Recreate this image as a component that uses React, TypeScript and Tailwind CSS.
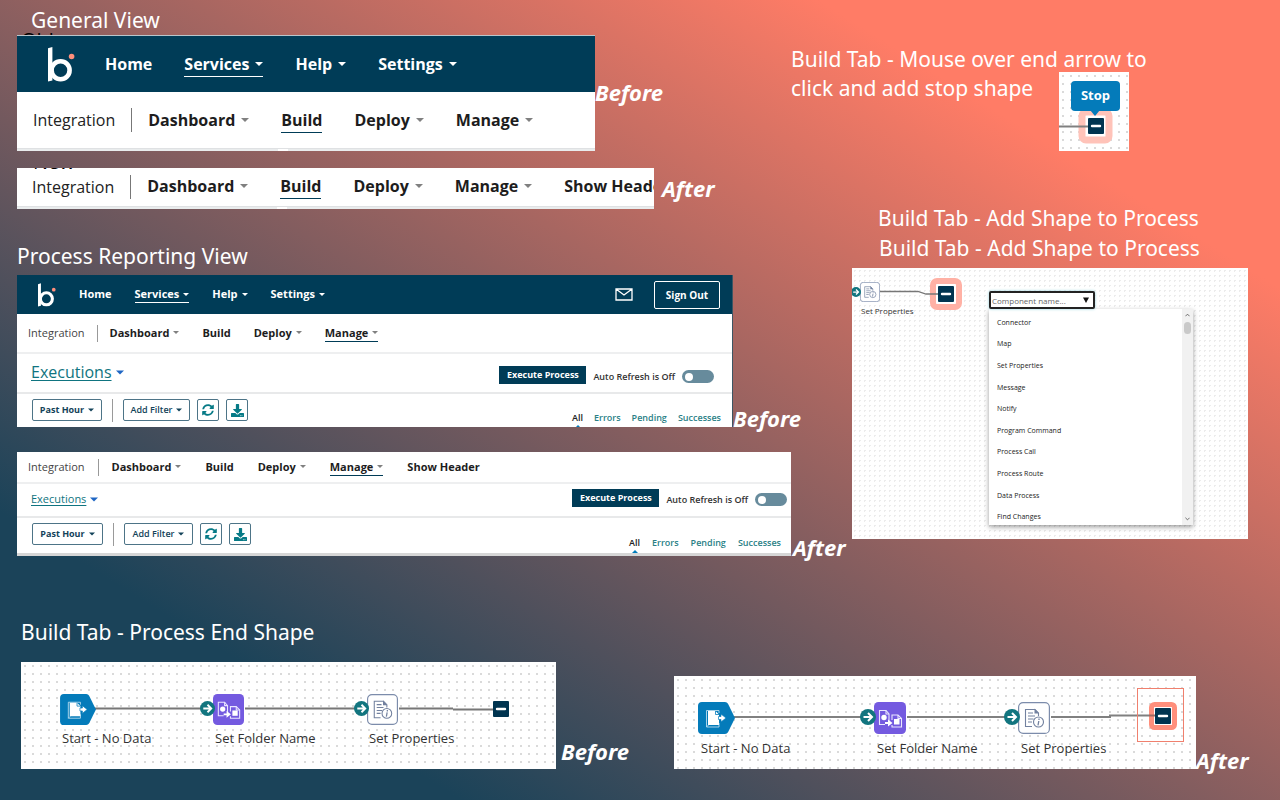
import type { ReactNode } from "react";
import { FaDownload, FaSyncAlt } from "react-icons/fa";

function Caret({ className }: { className: string }) {
  return (
    <svg viewBox="0 0 8 4" className={className} aria-hidden="true">
      <path d="M0 0h8L4 4z" fill="currentColor" />
    </svg>
  );
}

function Logo({ className }: { className: string }) {
  return (
    <svg viewBox="0 0 27 35" className={className} role="img" aria-label="Boomi">
      <path d="M0 1.2L4.400 0v33.6L0 34.600z" fill="#fff" />
      <circle cx="12.600" cy="23.200" r="9" fill="none" stroke="#fff" strokeWidth="4.600" />
      <circle cx="23.6" cy="9.5" r="2.800" fill="#ff8f7c" />
    </svg>
  );
}

function Heading({ children, className = "" }: { children: ReactNode; className?: string }) {
  return (
    <h2 className={`pt-px font-['Noto_Sans','Open_Sans',sans-serif] text-[21px] leading-[29px] whitespace-nowrap text-white ${className}`}>
      {children}
    </h2>
  );
}

function Tag({ children, className = "" }: { children: ReactNode; className?: string }) {
  return (
    <p className={`self-end font-['Noto_Sans','Open_Sans',sans-serif] text-[22px] leading-7 font-bold italic whitespace-nowrap text-white ${className}`}>
      {children}
    </p>
  );
}

type Item = { label: string; menu?: boolean; active?: boolean };

const topItems: Item[] = [
  { label: "Home" },
  { label: "Services", menu: true, active: true },
  { label: "Help", menu: true },
  { label: "Settings", menu: true },
];

function subItems(active: string, showHeader: boolean): Item[] {
  const items: Item[] = [
    { label: "Dashboard", menu: true },
    { label: "Build" },
    { label: "Deploy", menu: true },
    { label: "Manage", menu: true },
  ];
  if (showHeader) items.push({ label: "Show Header" });
  return items.map((i) => ({ ...i, active: i.label === active }));
}

function NavLinks({ items, small, dark }: { items: Item[]; small?: boolean; dark?: boolean }) {
  return (
    <>
      {items.map((i) => (
        <a
          key={i.label}
          href="#"
          className={[
            "flex shrink-0 items-center border-b font-bold whitespace-nowrap",
            small ? "gap-1 text-[11px] leading-4" : "gap-[6px] text-base leading-6",
            dark ? "text-white" : "text-[#1d1d1d]",
            i.active ? (dark ? "border-white" : "border-[#003c57]") : "border-transparent",
          ].join(" ")}
        >
          {i.label}
          {i.menu && (
            <Caret
              className={`${small ? "h-[3px] w-[6px]" : "h-1 w-2"} ${dark ? "text-white" : "text-[#808080]"}`}
            />
          )}
        </a>
      ))}
    </>
  );
}

function TopBar({ small, children }: { small?: boolean; children?: ReactNode }) {
  return (
    <nav
      className={
        small
          ? "flex h-[39px] items-center gap-[23px] bg-[#003c57] pr-3 pl-[21px]"
          : "flex h-14 items-center gap-8 bg-[#003c57] pl-[31px]"
      }
    >
      <Logo className={small ? "h-6 w-[18px] shrink-0" : "-mr-[2px] h-[35px] w-[27px] shrink-0"} />
      <NavLinks items={topItems} small={small} dark />
      {children}
    </nav>
  );
}

type Size = "large" | "small" | "wide";

const barGap: Record<Size, string> = {
  large: "gap-8 pl-4",
  small: "gap-[23px] pl-[11px]",
  wide: "gap-6 pl-[11px]",
};

const leadGap: Record<Size, string> = {
  large: "gap-4",
  small: "gap-3",
  wide: "gap-[13px]",
};

function SubBar({ size, items, className }: { size: Size; items: Item[]; className: string }) {
  const small = size !== "large";
  return (
    <nav className={`flex items-center ${barGap[size]} ${className}`}>
      <div className={`flex items-center ${leadGap[size]}`}>
        <span className={small ? "text-[11px] leading-4 text-[#444]" : "text-base leading-6 text-[#222]"}>
          Integration
        </span>
        <span className={small ? "h-[17px] w-px bg-[#999]" : "h-6 w-px bg-[#777]"} />
        <NavLinks items={items.slice(0, 1)} small={small} />
      </div>
      <NavLinks items={items.slice(1)} small={small} />
    </nav>
  );
}

function ExecutionsBar({
  id,
  large,
  className,
  actionsClass,
}: {
  id: string;
  large?: boolean;
  className: string;
  actionsClass: string;
}) {
  return (
    <div className={`flex items-center justify-between border-t-2 border-[#eeeff0] pl-[14px] ${className}`}>
      <a href="#" className="flex items-center gap-1 pb-[2px] text-[#0f7480]">
        <span
          className={
            large
              ? "text-base leading-6 underline underline-offset-2"
              : "text-[11px] leading-4 underline underline-offset-2"
          }
        >
          Executions
        </span>
        <Caret className="h-[5px] w-2 text-[#1f66c4]" />
      </a>
      <div className={`flex items-center gap-[7px] ${actionsClass}`}>
        <button type="button" className="h-[18px] w-[87px] bg-[#003c57] text-[9px] leading-3 font-bold whitespace-nowrap text-white">
          Execute Process
        </button>
        <label htmlFor={id} className="pt-1 text-[9px] leading-3 font-semibold whitespace-nowrap text-[#333]">
          Auto Refresh is Off
        </label>
        <input
          id={id}
          type="checkbox"
          role="switch"
          className="mt-1 flex h-[13px] w-8 shrink-0 appearance-none items-center rounded-full bg-[#678b9c] px-[3px] before:size-2 before:rounded-full before:bg-white before:content-[''] checked:justify-end"
        />
      </div>
    </div>
  );
}

function FilterBar({ wide, className, tabsClass }: { wide?: boolean; className: string; tabsClass: string }) {
  const box = "flex h-[22px] items-center justify-center rounded-xs border border-[#4d7487] bg-white";
  return (
    <div className={`flex justify-between border-t-2 border-[#e8e9ea] pl-[15px] ${className}`}>
      <div className="flex h-[22px] items-center gap-[7px]">
        <button
          type="button"
          className={`${box} gap-1 text-[9px] font-bold whitespace-nowrap text-[#134259] ${wide ? "w-[71px]" : "w-[70px]"}`}
        >
          Past Hour
          <Caret className="h-1 w-[6px]" />
        </button>
        <span className="mx-[3px] h-[23px] w-px bg-[#9a9a9a]" />
        <button
          type="button"
          className={`${box} gap-1 text-[9px] font-semibold whitespace-nowrap text-[#134259] ${wide ? "w-[69px]" : "w-[67px]"}`}
        >
          Add Filter
          <Caret className="h-1 w-[6px]" />
        </button>
        <button type="button" aria-label="Refresh" className={`${box} w-[22px] text-[#067a86]`}>
          <FaSyncAlt className="size-3" />
        </button>
        <button type="button" aria-label="Download" className={`${box} w-[22px] text-[#067a86]`}>
          <FaDownload className="size-[13px]" />
        </button>
      </div>
      <div className={`flex items-start text-[9px] leading-3 font-semibold text-[#2a7f86] ${tabsClass}`}>
        <a href="#" className="flex flex-col items-center text-[#222]">
          All
          <svg viewBox="0 0 8 4" className="mt-px h-1 w-2" aria-hidden="true">
            <path d="M0 4L4 0l4 4z" fill="#007cbb" />
          </svg>
        </a>
        <a href="#">Errors</a>
        <a href="#">Pending</a>
        <a href="#">Successes</a>
      </div>
    </div>
  );
}

function StopGlyph() {
  return (
    <>
      <rect width="16" height="16" rx="1" fill="#003450" />
      <path d="M4 8h8" stroke="#fff" strokeWidth="2.4" strokeLinecap="round" />
    </>
  );
}

function ArrowGlyph() {
  return (
    <>
      <circle cx="8" cy="8" r="8" fill="#12757f" />
      <path d="M3.5 8h8M8 4l4 4-4 4" fill="none" stroke="#fff" strokeWidth="2" />
    </>
  );
}

function StartGlyph() {
  return (
    <>
      <path d="M4 0h23q2 0 3 1.8l7 14.2-7 14.2Q29 32 27 32H4q-4 0-4-4V4q0-4 4-4z" fill="#047bba" />
      <path d="M21 11V8.500H8.500v16.500H21V21M8.500 25l2-2" fill="none" stroke="#b9dcef" strokeWidth=".9" />
      <path d="M10 9h7.500l3.500 3.500v10.500H10z" fill="#fff" />
      <path d="M17.500 9v3.500H21" fill="none" stroke="#047bba" strokeWidth=".8" />
      <path d="M20.500 14.500H23V12l5 4-5 4v-2.500h-2.500z" fill="#fff" stroke="#047bba" strokeWidth=".7" />
    </>
  );
}

function FolderGlyph() {
  return (
    <>
      <rect width="32" height="32" rx="4.500" fill="#745ae0" />
      <g fill="none" stroke="#eae6ff" strokeWidth="1.100">
        <path d="M15 19V12l-3-3.500H5.500v14H11" />
        <path d="M12 8.500V12h3" />
        <path d="M18 18v-5h6l3.500 3.500V25H18v-2" />
        <path d="M24 13v3.500h3.500" />
      </g>
      <circle cx="10" cy="15.500" r="2.700" fill="#fff" />
      <rect x="20" y="17" width="5.500" height="5.500" fill="#fff" />
      <path d="M11 20h3v-2.500l4.500 3.500-4.500 3.500V22h-3z" fill="#fff" />
    </>
  );
}

function PropertiesGlyph() {
  return (
    <>
      <rect x=".6" y=".6" width="30.800" height="30.800" rx="4.500" fill="#fff" stroke="#7c8cab" strokeWidth="1.200" />
      <g fill="none" stroke="#72819f" strokeWidth="1.100">
        <path d="M14 24.500H7.500v-17h9.500L20.500 11v3" />
        <path d="M10 11h5M10 14h7M10 17h5.500M10 20h4" />
        <circle cx="20.500" cy="20" r="5" fill="#fff" />
      </g>
      <path d="M16.500 6.500l4.500 5h-4.500z" fill="#72819f" />
      <path d="M21 16.600v1.400M20.800 19l-.8 4.300" stroke="#72819f" strokeWidth="1.300" />
    </>
  );
}

function Node({
  className,
  label,
  labelClass,
  view,
  children,
}: {
  className: string;
  label?: string;
  labelClass?: string;
  view: string;
  children: ReactNode;
}) {
  return (
    <div className={`absolute ${className}`}>
      <svg viewBox={view} className="block h-full w-full" role="img" aria-label={label ?? "Stop"}>
        {children}
      </svg>
      {label && <span className={`absolute whitespace-nowrap text-[#333] ${labelClass}`}>{label}</span>}
    </div>
  );
}

const shapes = [
  "Connector",
  "Map",
  "Set Properties",
  "Message",
  "Notify",
  "Program Command",
  "Process Call",
  "Process Route",
  "Data Process",
  "Find Changes",
];

const dots8 = "bg-white bg-[radial-gradient(circle,#dadada_1px,transparent_1px)] bg-size-[8px_8px]";
const dots5 = "bg-white bg-[radial-gradient(circle,#ececec_1px,transparent_1px)] bg-size-[5px_5px]";

export default function App() {
  return (
    <main className="min-h-screen bg-[linear-gradient(to_top_right,#1b4359_18%,#ff7c66_82%)] pt-[5px] pb-[31px] font-['Open_Sans','Noto_Sans',sans-serif]">
      <div className="grid grid-cols-[835fr_428fr] pl-[17px]">
        <div className="min-w-0">
          <section>
            <Heading className="pl-[14px]">General View</Heading>
            <div className="relative grid grid-cols-[578fr_257fr]">
              <div aria-hidden="true" className="absolute -top-[2px] left-1 h-[2px] overflow-hidden text-xl leading-[14px] text-black">
                Old
              </div>
              <div className="min-w-0 overflow-hidden border-t border-[#b9c6cc] bg-white">
                <TopBar />
                <SubBar size="large" items={subItems("Build", false)} className="h-14" />
                <div className="flex h-[3px] border-t border-[#dfe1e3] bg-[#e9eced]">
                  <span className="ml-[261px] w-[10px] bg-white" />
                </div>
              </div>
              <Tag className="mb-[45px]">Before</Tag>
            </div>
            <div className="mt-[17px] grid grid-cols-[637fr_198fr]">
              <div className="relative min-w-0 overflow-hidden bg-white">
                <div aria-hidden="true" className="absolute top-0 left-4 flex h-[2px] items-end overflow-hidden text-xl leading-4 text-black">
                  New
                </div>
                <SubBar size="large" items={subItems("Build", true)} className="h-[37px] -translate-x-px" />
                <div className="mt-px flex h-[3px] border-t border-[#dfe1e3] bg-[#e9eced]">
                  <span className="ml-[260px] w-[10px] bg-white" />
                </div>
              </div>
              <Tag className="mb-[7px] pl-2">After</Tag>
            </div>
          </section>

          <section className="mt-8">
            <Heading>Process Reporting View</Heading>
            <div className="mt-1 grid grid-cols-[716fr_119fr]">
              <div className="min-w-0 overflow-hidden border-r border-[#3c5563] bg-white">
                <TopBar small>
                  <svg viewBox="0 0 18 13" className="ml-auto h-[13px] w-[18px] shrink-0" role="img" aria-label="Messages">
                    <path d="M1 1h16v11H1zM1 1l8 6 8-6" fill="none" stroke="#fff" strokeWidth="1.300" />
                  </svg>
                  <button type="button" className="-ml-[2px] h-7 w-[66px] shrink-0 rounded-xs border border-white text-[10px] leading-4 font-bold whitespace-nowrap text-white">
                    Sign Out
                  </button>
                </TopBar>
                <SubBar size="small" items={subItems("Manage", false)} className="h-[38px]" />
                <ExecutionsBar id="refresh-before" large className="h-10 pr-[18px]" actionsClass="pt-[3px]" />
                <FilterBar className="h-[35px] pt-[5px]" tabsClass="gap-[11px] pt-[13px] pr-[11px]" />
              </div>
              <Tag className="-mb-[5px]">Before</Tag>
            </div>
            <div className="mt-[25px] grid grid-cols-[774fr_61fr]">
              <div className="min-w-0 overflow-hidden border-b-[3px] border-[#d6d6d6] bg-white">
                <SubBar size="wide" items={subItems("Manage", true)} className="h-[30px]" />
                <ExecutionsBar id="refresh-after" className="h-[34px] pr-1" actionsClass="pb-[5px]" />
                <FilterBar wide className="h-[37px] pt-[5px]" tabsClass="gap-3 pt-[14px] pr-[10px]" />
              </div>
              <Tag className="-mb-[5px] pl-[2px]">After</Tag>
            </div>
          </section>
        </div>

        <div className="min-w-0">
          <section className="-ml-[61px] pt-[39px]">
            <Heading>
              Build Tab - Mouse over end arrow to
              <br />
              click and add stop shape
            </Heading>
            <div className={`relative -mt-[31px] ml-[268px] h-[79px] w-[70px] ${dots8}`}>
              <svg viewBox="0 0 70 79" className="absolute inset-0 h-full w-full" aria-hidden="true">
                <rect x="23" y="40" width="27" height="28" rx="4" fill="#fff" stroke="#ffc3b9" strokeWidth="7" />
                <path d="M0 54.500h29" stroke="#808080" strokeWidth="2" />
                <path d="M31 38l5 6 5-6z" fill="#047bba" />
              </svg>
              <Node className="top-[46px] left-[29px] size-4" view="0 0 16 16">
                <StopGlyph />
              </Node>
              <div role="tooltip" className="absolute top-[9px] left-3 flex h-[30px] w-[49px] items-center justify-center rounded-sm bg-[#047bba] text-[13px] font-bold text-white">
                Stop
              </div>
            </div>
          </section>

          <section className="mt-[52px]">
            <Heading className="pl-[26px]">Build Tab - Add Shape to Process</Heading>
            <Heading className="pl-[27px]">Build Tab - Add Shape to Process</Heading>
            <div className="mt-[5px] grid grid-cols-[396fr_32fr]">
              <div className={`relative h-[271px] min-w-0 overflow-hidden ${dots5}`}>
                <svg viewBox="0 0 120 50" className="absolute top-0 left-0 h-[50px] w-[120px]" aria-hidden="true">
                  <rect x="81" y="13" width="26" height="26" rx="4" fill="#fff" stroke="#ffb1a5" strokeWidth="6" />
                  <path d="M28 23.500h38l8 2.500h14" fill="none" stroke="#777" strokeWidth="1.300" />
                </svg>
                <Node
                  className="top-[14px] left-2 size-5"
                  view="0 0 32 32"
                  label="Set Properties"
                  labelClass="left-px top-[23px] text-[8px] leading-3"
                >
                  <PropertiesGlyph />
                </Node>
                <svg viewBox="0 0 16 16" className="absolute top-[19px] -left-px size-[10px]" aria-hidden="true">
                  <ArrowGlyph />
                </svg>
                <Node className="top-[18px] left-[86px] size-4" view="0 0 16 16">
                  <StopGlyph />
                </Node>
                <div className="absolute top-[23px] left-[137px] w-[204px]">
                  <div className="relative h-[18px] w-[106px] rounded-xs border-2 border-[#222] bg-white shadow-[0_0_3px_#8fd0dc]">
                    <input
                      aria-label="Component name"
                      placeholder="Component name..."
                      className="block h-full w-full bg-transparent px-px text-[8px] leading-3 placeholder:text-[#666] focus:outline-none"
                    />
                    <svg viewBox="0 0 6 6" className="absolute top-1 right-1 size-[6px]" aria-hidden="true">
                      <path d="M0 .5h6L3 6z" fill="#111" />
                    </svg>
                  </div>
                  <div className="flex h-[216px] bg-white shadow-[0_2px_5px_rgba(0,0,0,0.4)]">
                    <ul className="mt-[3px] flex h-[216px] flex-1 flex-col pl-2 text-[7px] leading-3 text-[#222]">
                      {shapes.map((s) => (
                        <li key={s} className="flex flex-1 items-center">
                          <button type="button">{s}</button>
                        </li>
                      ))}
                    </ul>
                    <div className="flex w-[11px] flex-col items-center bg-[#f1f1f1] py-1">
                      <svg viewBox="0 0 6 4" className="h-1 w-[5px]" aria-hidden="true">
                        <path d="M.5 3.500L3 1l2.500 2.500" fill="none" stroke="#555" />
                      </svg>
                      <span className="mt-[5px] h-3 w-[7px] rounded-full bg-[#c9c9c9]" />
                      <svg viewBox="0 0 6 4" className="mt-auto h-1 w-[5px]" aria-hidden="true">
                        <path d="M.5 .5L3 3 5.500 .5" fill="none" stroke="#555" />
                      </svg>
                    </div>
                  </div>
                </div>
              </div>
            </div>
          </section>
        </div>
      </div>

      <div className="mt-[61px] grid grid-cols-[535fr_118fr_522fr_84fr] items-end pl-[21px]">
        <section className="min-w-0">
          <Heading>Build Tab - Process End Shape</Heading>
          <div className={`relative mt-[15px] h-[107px] overflow-hidden ${dots8}`}>
            <svg viewBox="0 0 535 107" className="absolute top-0 left-0 h-[107px] w-[535px]" aria-hidden="true">
              <path d="M73 46.500h107M224 46.500h110M378 46.500h54M432 47.500h41" stroke="#777" strokeWidth="2" />
            </svg>
            <Node className="top-8 left-[39px] h-[31px] w-9" view="0 0 37 32" label="Start - No Data" labelClass="left-[2px] top-9 text-[13px] leading-4">
              <StartGlyph />
            </Node>
            <Node className="top-8 left-[192px] size-[31px]" view="0 0 32 32" label="Set Folder Name" labelClass="left-[2px] top-9 text-[13px] leading-4">
              <FolderGlyph />
            </Node>
            <Node className="top-8 left-[346px] size-[31px]" view="0 0 32 32" label="Set Properties" labelClass="left-[2px] top-9 text-[13px] leading-4">
              <PropertiesGlyph />
            </Node>
            <svg viewBox="0 0 16 16" className="absolute top-[39px] left-[179px] size-[15px]" aria-hidden="true">
              <ArrowGlyph />
            </svg>
            <svg viewBox="0 0 16 16" className="absolute top-[39px] left-[333px] size-[15px]" aria-hidden="true">
              <ArrowGlyph />
            </svg>
            <Node className="top-[39px] left-[472px] size-4" view="0 0 16 16">
              <StopGlyph />
            </Node>
          </div>
        </section>
        <Tag className="mb-1 pl-[5px]">Before</Tag>
        <section className={`relative h-[93px] min-w-0 overflow-hidden ${dots8}`}>
          <svg viewBox="0 0 522 93" className="absolute top-0 left-0 h-[93px] w-[522px]" aria-hidden="true">
            <path d="M60 41h128M233 41h99M377 41h60M435 39.500h48" stroke="#808080" strokeWidth="2" />
            <rect x="463.500" y="12.500" width="46" height="53" fill="none" stroke="#f0806e" />
            <rect x="477.500" y="28.500" width="23" height="23" rx="3" fill="#fff" stroke="#ff8f7c" strokeWidth="5" />
            <path d="M475 39.500h8" stroke="#a06a62" strokeWidth="2" />
          </svg>
          <Node className="top-[26px] left-6 h-8 w-[37px]" view="0 0 37 32" label="Start - No Data" labelClass="left-[3px] top-[38px] text-[13px] leading-4">
            <StartGlyph />
          </Node>
          <Node className="top-[26px] left-[200px] size-8" view="0 0 32 32" label="Set Folder Name" labelClass="left-[3px] top-[38px] text-[13px] leading-4">
            <FolderGlyph />
          </Node>
          <Node className="top-[26px] left-[344px] size-8" view="0 0 32 32" label="Set Properties" labelClass="left-[3px] top-[38px] text-[13px] leading-4">
            <PropertiesGlyph />
          </Node>
          <svg viewBox="0 0 16 16" className="absolute top-[33px] left-[186px] size-4" aria-hidden="true">
            <ArrowGlyph />
          </svg>
          <svg viewBox="0 0 16 16" className="absolute top-[33px] left-[330px] size-4" aria-hidden="true">
            <ArrowGlyph />
          </svg>
          <Node className="top-8 left-[481px] size-4" view="0 0 16 16">
            <StopGlyph />
          </Node>
        </section>
        <Tag className="-mb-[5px]">After</Tag>
      </div>
    </main>
  );
}
